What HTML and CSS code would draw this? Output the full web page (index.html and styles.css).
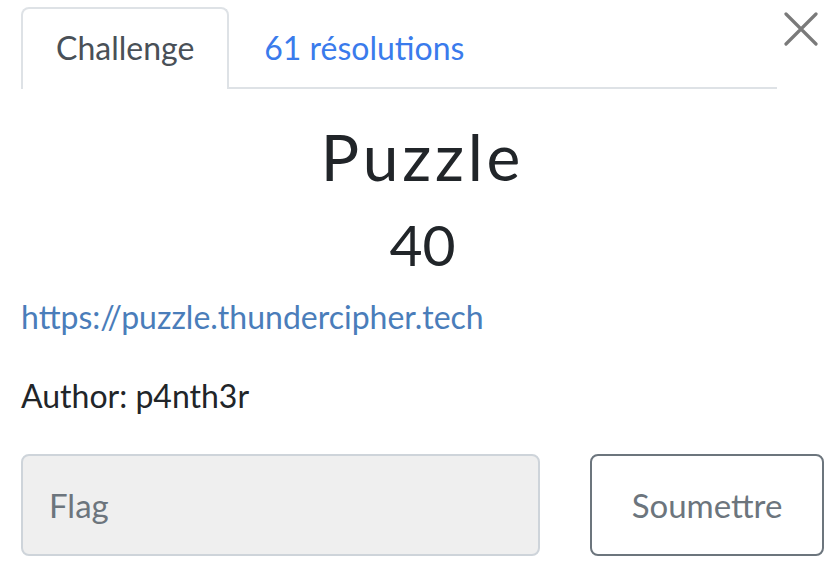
FILE: index.html
```html
<!DOCTYPE html>
<html>
<head>
<meta charset="utf-8">
<link rel="stylesheet" href="styles.css">
</head>
<body>
<div class="modal">
  <div class="header">
    <ul class="tabs">
      <li class="tab active">Challenge</li>
      <li class="tab link">61 résolutions</li>
    </ul>
    <button class="close" aria-label="Close">
      <svg width="34" height="34" viewBox="0 0 34 34"><path d="M2 2 L32 32 M32 2 L2 32" stroke="#7a7a7a" stroke-width="3.2" stroke-linecap="round" fill="none"/></svg>
    </button>
  </div>
  <div class="body">
    <h2 class="title">Puzzle</h2>
    <h3 class="value">40</h3>
    <p class="desc"><a href="#">https://puzzle.thundercipher.tech</a></p>
    <p class="author">Author: p4nth3r</p>
    <div class="submit-row">
      <input class="flag" type="text" placeholder="Flag">
      <button class="submit">Soumettre</button>
    </div>
  </div>
</div>
</body>
</html>
```
FILE: styles.css
```css
html, body {
  margin: 0;
  padding: 0;
  background: #fff;
  font-family: Lato, "Open Sans", sans-serif;
  color: #212529;
}
.modal {
  padding: 0 14px 0 21px;
}
.header {
  display: flex;
  align-items: flex-start;
}
.tabs {
  list-style: none;
  margin: 7px 0 0 0;
  padding: 0;
  display: flex;
  width: 756px;
  border-bottom: 2px solid #dee2e6;
}
.tab {
  font-size: 32px;
  line-height: 40px;
  padding: 21px 33px 19px 33px;
}
.tab.active {
  color: #495057;
  border: 2px solid #dee2e6;
  border-bottom: none;
  border-radius: 8px 8px 0 0;
  margin-bottom: -2px;
  padding-top: 19px;
  padding-bottom: 21px;
  background: #fff;
}
.tab.link {
  color: #3a7bec;
  padding-left: 35px;
}
.close {
  background: none;
  border: none;
  padding: 0;
  margin: 12px 0 0 7px;
  cursor: pointer;
  width: 34px;
  height: 34px;
}
.title {
  margin: 30px 0 0 0;
  text-align: center;
  font-weight: 400;
  font-size: 64px;
  letter-spacing: 3.8px;
  line-height: 76px;
}
.value {
  margin: 15px 0 0 0;
  text-align: center;
  font-weight: 400;
  font-size: 57px;
  line-height: 68px;
}
.desc {
  margin: 17px 0 0 0;
  font-size: 32px;
  line-height: 44px;
}
.desc a {
  color: #4a7dba;
  text-decoration: none;
}
.author {
  margin: 35px 0 0 0;
  font-size: 32px;
  line-height: 44px;
}
.submit-row {
  display: flex;
  margin-top: 36px;
  gap: 50px;
}
.flag {
  box-sizing: border-box;
  width: 519px;
  height: 102px;
  background: #efefef;
  border: 2px solid #ced4da;
  border-radius: 8px;
  font-family: Lato, sans-serif;
  font-size: 33px;
  padding: 0 26px;
  color: #495057;
}
.flag::placeholder {
  color: #6c757d;
}
.submit {
  box-sizing: border-box;
  width: 234px;
  height: 102px;
  background: #fff;
  border: 2px solid #6c757d;
  border-radius: 8px;
  font-family: Lato, sans-serif;
  font-size: 33px;
  color: #6c757d;
}
```
